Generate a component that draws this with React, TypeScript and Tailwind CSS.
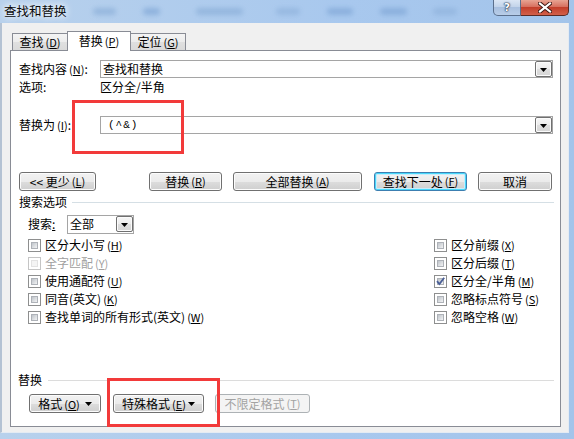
import React from "react";

const Acc = ({ k }: { k: string }) => (
  <span className="ml-[2px] text-[11px]">
    (<span className="underline underline-offset-[1px]">{k}</span>)
  </span>
);

const Tri = ({ color = "#000" }: { color?: string }) => (
  <svg width="7" height="4" viewBox="0 0 7 4" className="block">
    <path d="M0 0h7L3.5 4z" fill={color} />
  </svg>
);

const DropBtn = () => (
  <div className="w-[17px] h-[16px] shrink-0 border border-[#707070] rounded-[2px] bg-[linear-gradient(#f6f6f6,#ececec_50%,#dedede_50%,#d6d6d6)] shadow-[inset_0_0_0_1px_#fbfbfb] flex items-center justify-center pt-[2px]">
    <Tri />
  </div>
);

const btnBase =
  "h-[19px] shrink-0 rounded-[3px] border flex items-center justify-center text-[12px] leading-none";
const btnNormal =
  "border-[#707070] bg-[linear-gradient(#f2f2f2,#ebebeb_50%,#dddddd_50%,#cfcfcf)] shadow-[inset_0_0_0_1px_#fcfcfc]";
const btnFocus =
  "border-[#3c7fb1] bg-[linear-gradient(#f2f2f2,#ebebeb_50%,#dddddd_50%,#cfcfcf)] shadow-[inset_0_0_0_1px_#48d8fb,inset_0_0_0_2px_#c8ecfb]";
const btnOff = "border-[#adb2b5] bg-[#f4f4f4] text-[#a3a3a3]";

const CheckBox = ({ checked = false, disabled = false }: { checked?: boolean; disabled?: boolean }) => (
  <div
    className={
      "relative w-[13px] h-[13px] shrink-0 border bg-white p-[2px] " +
      (disabled ? "border-[#c5c5c5]" : "border-[#8e8f8f]")
    }
  >
    <div
      className={
        "w-full h-full border " +
        (disabled
          ? "border-[#e2e2e2] bg-[#f4f4f4]"
          : "border-[#aeb2b8] bg-[linear-gradient(135deg,#bfc4ca,#f2f3f4)]")
      }
    />
    {checked && (
      <svg width="13" height="13" viewBox="0 0 13 13" className="absolute -left-px -top-px">
        <path d="M3 6.2 5.4 9 10.2 2.8" fill="none" stroke="#4a5f97" strokeWidth="1.8" />
      </svg>
    )}
  </div>
);

const Opt = ({
  label,
  k,
  checked,
  disabled,
}: {
  label: string;
  k: string;
  checked?: boolean;
  disabled?: boolean;
}) => (
  <div className={"h-[18px] flex items-center gap-[4px] " + (disabled ? "text-[#a0a0a0]" : "")}>
    <CheckBox checked={checked} disabled={disabled} />
    <span>
      {label}
      <Acc k={k} />
    </span>
  </div>
);

export default function App() {
  return (
    <div className="relative w-[574px] h-[439px] overflow-hidden bg-[linear-gradient(90deg,#b8d1ec,#a8c8ee_60%,#a3c4ea)] text-black font-['Noto_Sans_CJK_SC',sans-serif] text-[12px] leading-[14px]">
      {/* caption bar */}
      <div className="h-[23px] flex items-start pl-[4px] pr-[5px]">
        <div className="pt-[3px] text-[12.5px] leading-[15px] text-[#0a0a0a] [text-shadow:0_0_6px_#ffffff,0_0_10px_#ffffff]">
          查找和替换
        </div>
        <div className="flex items-start pt-[8px] blur-[2.5px] opacity-70">
          <div className="ml-[26px] w-[23px] h-[7px] rounded bg-[#8aaed8]" />
          <div className="ml-[27px] w-[17px] h-[7px] rounded bg-[#7fa6d6]" />
          <div className="ml-[36px] w-[47px] h-[7px] rounded bg-[#8aaed8]" />
          <div className="ml-[33px] w-[24px] h-[7px] rounded bg-[#8fb2dc]" />
          <div className="ml-[27px] w-[26px] h-[7px] rounded bg-[#7fa6d6]" />
          <div className="ml-[27px] w-[27px] h-[7px] rounded bg-[#7fa6d6]" />
          <div className="ml-[26px] w-[24px] h-[7px] rounded bg-[#8fb2dc]" />
        </div>
        <div className="flex-1" />
        <div className="flex h-[16px]">
          <div className="w-[28px] h-full rounded-bl-[5px] border border-t-0 border-[#5b6f8c] bg-[linear-gradient(#dbe6f4,#c3d4ea_45%,#a9c0df_50%,#b8cde8)] flex items-center justify-center">
            <span className="font-['DejaVu_Sans',sans-serif] text-[11px] font-bold leading-[14px] text-white [text-shadow:0_0_1px_#1c2c46,0_0_1px_#1c2c46,0_0_2px_#1c2c46]">
              ?
            </span>
          </div>
          <div className="w-[48px] h-full rounded-br-[5px] border border-l-0 border-t-0 border-[#5b2a24] bg-[linear-gradient(#e8a493,#d7705f_45%,#c33f2b_50%,#d2604a)] flex items-center justify-center">
            <svg width="14" height="11" viewBox="0 0 14 11">
              <path d="M2 1.5 12 9.5M12 1.5 2 9.5" stroke="#3b1612" strokeWidth="4" strokeLinecap="square" />
              <path d="M2 1.5 12 9.5M12 1.5 2 9.5" stroke="#ffffff" strokeWidth="2.2" strokeLinecap="square" />
            </svg>
          </div>
        </div>
      </div>

      {/* dialog body */}
      <div className="w-[569px] h-[410px] bg-[#f0f0f0] border-l-[2px] border-l-[#b4c2d3] border-r border-b border-[#e4ebf3] pl-[8px] pt-[8px] flex flex-col">
        {/* tabs */}
        <div className="relative z-10 flex items-end h-[20px] -mb-px ml-[2px]">
          <div className="w-[56px] h-[17px] mb-px border border-b-0 border-[#898c95] bg-[linear-gradient(#f4f4f4,#ececec_50%,#e0e0e0_50%,#dadada)] flex items-center justify-center">
            查找
            <Acc k="D" />
          </div>
          <div className="w-[64px] h-[20px] -ml-px border border-b-0 border-[#898c95] bg-white flex items-center justify-center pb-[1px]">
            替换
            <Acc k="P" />
          </div>
          <div className="w-[56px] h-[17px] mb-px -ml-px border border-b-0 border-[#898c95] bg-[linear-gradient(#f4f4f4,#ececec_50%,#e0e0e0_50%,#dadada)] flex items-center justify-center">
            定位
            <Acc k="G" />
          </div>
        </div>

        {/* tab page */}
        <div className="w-[551px] h-[377px] border border-[#898c95] bg-white pl-[8px] pt-[9px] flex flex-col">
          <div className="h-[18px] flex items-center">
            <span className="w-[81px]">
              查找内容
              <Acc k="N" />:
            </span>
            <div className="w-[453px] h-[18px] border border-[#a5a5a5] flex items-center justify-between pl-[2px]">
              <span>查找和替换</span>
              <DropBtn />
            </div>
          </div>
          <div className="h-[18px] flex items-center">
            <span className="w-[81px]">选项:</span>
            <span>区分全/半角</span>
          </div>

          <div className="h-[18px] mt-[20px] flex items-center">
            <span className="w-[81px]">
              替换为
              <Acc k="I" />:
            </span>
            <div className="w-[453px] h-[18px] border border-[#a5a5a5] flex items-center justify-between pl-[7px]">
              <span className="font-['Liberation_Mono',monospace] text-[11px] tracking-[1px]">(^&amp;)</span>
              <DropBtn />
            </div>
          </div>

          {/* command buttons */}
          <div className="flex mt-[38px]">
            <div className={btnBase + " " + btnNormal + " w-[77px]"}>
              &lt;&lt; 更少
              <Acc k="L" />
            </div>
            <div className={btnBase + " " + btnNormal + " w-[73px] ml-[53px]"}>
              替换
              <Acc k="R" />
            </div>
            <div className={btnBase + " " + btnNormal + " w-[129px] ml-[11px]"}>
              全部替换
              <Acc k="A" />
            </div>
            <div className={btnBase + " " + btnFocus + " w-[93px] ml-[12px]"}>
              查找下一处
              <Acc k="F" />
            </div>
            <div className={btnBase + " " + btnNormal + " w-[74px] ml-[11px]"}>取消</div>
          </div>

          {/* search options */}
          <div className="h-[18px] mt-[2px] flex items-center pr-[6px]">
            <span>搜索选项</span>
            <div className="flex-1 h-px ml-[5px] bg-[#d5dfe5]" />
          </div>
          <div className="h-[20px] mt-[3px] pl-[9px] flex items-center">
            <span className="w-[39px]">
              搜索<span className="underline">:</span>
            </span>
            <div className="w-[67px] h-[19px] border border-[#a5a5a5] flex items-center justify-between pl-[2px]">
              <span>全部</span>
              <div className="h-[17px] flex items-center pr-0">
                <DropBtn />
              </div>
            </div>
          </div>

          <div className="flex mt-[2px] pl-[9px]">
            <div className="w-[406px] flex flex-col">
              <Opt label="区分大小写" k="H" />
              <Opt label="全字匹配" k="Y" disabled />
              <Opt label="使用通配符" k="U" />
              <Opt label="同音(英文)" k="K" />
              <Opt label="查找单词的所有形式(英文)" k="W" />
            </div>
            <div className="flex flex-col">
              <Opt label="区分前缀" k="X" />
              <Opt label="区分后缀" k="T" />
              <Opt label="区分全/半角" k="M" checked />
              <Opt label="忽略标点符号" k="S" />
              <Opt label="忽略空格" k="W" />
            </div>
          </div>

          {/* replace formatting */}
          <div className="h-[18px] mt-[45px] flex items-center pr-[6px] -ml-px">
            <span>替换</span>
            <div className="flex-1 h-px ml-[6px] bg-[#dcdcdc]" />
          </div>
          <div className="flex mt-[5px] pl-[10px]">
            <div className={btnBase + " " + btnNormal + " w-[72px] gap-[5px]"}>
              <span>
                格式
                <Acc k="O" />
              </span>
              <Tri />
            </div>
            <div className={btnBase + " " + btnNormal + " w-[91px] ml-[12px] gap-[2px]"}>
              <span>
                特殊格式
                <Acc k="E" />
              </span>
              <Tri />
            </div>
            <div className={btnBase + " " + btnOff + " w-[95px] ml-[11px]"}>
              不限定格式
              <Acc k="T" />
            </div>
          </div>
        </div>
      </div>

      {/* red highlight frames */}
      <div className="absolute left-[72px] top-[100px] w-[112px] h-[54px] border-[3px] border-[#f23a3a]" />
      <div className="absolute left-[107px] top-[378px] w-[113px] h-[49px] border-[3px] border-[#f23a3a]" />
    </div>
  );
}
